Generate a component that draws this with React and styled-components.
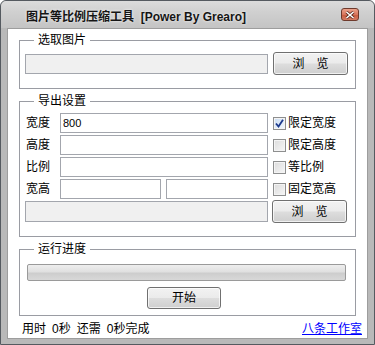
import React from "react";
import styled, { createGlobalStyle } from "styled-components";

const Global = createGlobalStyle`
  html, body { margin: 0; padding: 0; background: #ffffff; }
  body { font-family: "Liberation Sans", "Noto Sans CJK SC", sans-serif; font-size: 12px; color: #000; }
  * { box-sizing: border-box; }
`;

const FONT = `"Liberation Sans", "Noto Sans CJK SC", sans-serif`;

const Window = styled.div`
  width: 375px;
  height: 345px;
  border: 1px solid #555a60;
  border-radius: 6px 6px 0 0;
  background: #b9b9b9;
  display: flex;
  flex-direction: column;
  overflow: hidden;
`;

const TitleBar = styled.div`
  height: 27px;
  flex: none;
  display: flex;
  align-items: center;
  padding: 0 15px 0 25px;
  background: linear-gradient(#dcdcdc 0%, #d0d0d0 40%, #c4c4c4 100%);
  border-radius: 5px 5px 0 0;
`;

const Title = styled.div`
  flex: 1;
  font-family: ${FONT};
  font-weight: bold;
  font-size: 12px;
  line-height: 14px;
  color: #151515;
  white-space: pre;
  padding-top: 4px;
  text-shadow: 0 0 3px rgba(255, 255, 255, 0.9);
`;

const CloseBtn = styled.div`
  width: 18px;
  height: 13px;
  border: 1px solid #6e3a2c;
  border-radius: 3px;
  background: linear-gradient(#eba38c 0%, #d9765d 50%, #c85a3e 51%, #d57c63 100%);
  display: flex;
  align-items: center;
  justify-content: center;
`;

const Client = styled.div`
  flex: 1;
  margin: 0 6px 6px 6px;
  border: 1px solid #9d9d9d;
  background: #ffffff;
  padding: 11px 11px 0 11px;
  display: flex;
  flex-direction: column;
`;

const Group = styled.div`
  border: 1px solid #9a9ca3;
  display: flex;
  flex-direction: column;
  padding: 0 0 ${(p) => p.$pb}px 5px;
  margin-bottom: ${(p) => p.$mb}px;
`;

const Legend = styled.div`
  align-self: flex-start;
  margin: -8px 0 0 9px;
  padding: 0 4px;
  background: #ffffff;
  line-height: 14px;
  height: 14px;
  font-family: ${FONT};
  font-size: 12px;
  color: #000;
`;

const Row = styled.div`
  display: flex;
  align-items: center;
  gap: ${(p) => p.$gap ?? 5}px;
  margin-top: ${(p) => p.$mt}px;
  height: ${(p) => p.$h}px;
`;

const Label = styled.div`
  width: 30px;
  padding-left: 1px;
  font-family: ${FONT};
  font-size: 12px;
  line-height: 14px;
  flex: none;
`;

const TextBox = styled.input`
  width: ${(p) => p.$w}px;
  height: ${(p) => p.$h ?? 20}px;
  flex: none;
  border: 1px solid #a3a6ad;
  background: ${(p) => (p.$disabled ? "#f0f0f0" : "#ffffff")};
  font-family: "Liberation Sans", "DejaVu Sans", sans-serif;
  font-size: 11px;
  padding: 0 2px;
  margin: 0;
  outline: none;
  color: #000;
`;

const Button = styled.div`
  width: ${(p) => p.$w ?? 75}px;
  height: ${(p) => p.$h ?? 23}px;
  flex: none;
  border: 1px solid #707070;
  border-radius: 3px;
  background: linear-gradient(#f2f2f2 0%, #ebebeb 48%, #dddddd 52%, #cfcfcf 100%);
  box-shadow: inset 0 0 0 1px rgba(255, 255, 255, 0.7);
  display: flex;
  align-items: center;
  justify-content: center;
  font-family: ${FONT};
  font-size: 12px;
  line-height: 14px;
  white-space: pre;
  margin-left: ${(p) => p.$ml ?? 0}px;
`;

const Check = styled.div`
  display: flex;
  align-items: center;
  gap: 2px;
  font-family: ${FONT};
  font-size: 12px;
  line-height: 14px;
`;

const Box = styled.div`
  width: 13px;
  height: 13px;
  border: 1px solid #8e8f8f;
  background: ${(p) =>
    p.$on
      ? "linear-gradient(135deg, #c9dcf3, #f4f8fd)"
      : "linear-gradient(135deg, #dcdcdc, #f6f6f6)"};
  box-shadow: inset 0 0 0 1px #f4f4f4;
  display: flex;
  align-items: center;
  justify-content: center;
`;

const Progress = styled.div`
  height: 17px;
  margin: 8px 9px 0 2px;
  border: 1px solid #9a9a9a;
  border-radius: 2px;
  background: linear-gradient(#eeeeee 0%, #e0e0e0 45%, #cdcdcd 55%, #d8d8d8 100%);
`;

const Status = styled.div`
  height: 22px;
  display: flex;
  align-items: center;
  justify-content: space-between;
  margin: 0 -11px;
  padding: 0 5px 0 14px;
  font-family: ${FONT};
  font-size: 12px;
`;

const StatusLeft = styled.div`
  display: flex;
  gap: 6px;
`;

const Link = styled.a`
  color: #0000ff;
  text-decoration: underline;
  cursor: pointer;
`;

function CheckItem({ on, children }) {
  return (
    <Check>
      <Box $on={on}>
        {on && (
          <svg width="9" height="9" viewBox="0 0 9 9">
            <path d="M1 4.5 L3.5 7.5 L8 0.8" stroke="#1c3a8c" strokeWidth="1.8" fill="none" />
          </svg>
        )}
      </Box>
      {children}
    </Check>
  );
}

export default function App() {
  return (
    <>
      <Global />
      <Window>
        <TitleBar>
          <Title>{"图片等比例压缩工具  [Power By Grearo]"}</Title>
          <CloseBtn>
            <svg width="10" height="8" viewBox="0 0 10 8">
              <path d="M1.5 1 L8.5 7 M8.5 1 L1.5 7" stroke="#5a2a1e" strokeWidth="3" />
              <path d="M1.5 1 L8.5 7 M8.5 1 L1.5 7" stroke="#ffffff" strokeWidth="1.6" />
            </svg>
          </CloseBtn>
        </TitleBar>
        <Client>
          <Group $pb={13} $mb={12}>
            <Legend>选取图片</Legend>
            <Row $mt={5} $h={23}>
              <TextBox $w={243} $disabled readOnly />
              <Button>{"浏　览"}</Button>
            </Row>
          </Group>
          <Group $pb={13} $mb={12}>
            <Legend>导出设置</Legend>
            <Row $mt={5} $h={20}>
              <Label>宽度</Label>
              <TextBox $w={208} defaultValue="800" />
              <CheckItem on>限定宽度</CheckItem>
            </Row>
            <Row $mt={2} $h={20}>
              <Label>高度</Label>
              <TextBox $w={208} />
              <CheckItem>限定高度</CheckItem>
            </Row>
            <Row $mt={2} $h={20}>
              <Label>比例</Label>
              <TextBox $w={208} />
              <CheckItem>等比例</CheckItem>
            </Row>
            <Row $mt={2} $h={20}>
              <Label>宽高</Label>
              <Row $gap={5} $mt={0} $h={20}>
                <TextBox $w={101} />
                <TextBox $w={102} />
              </Row>
              <CheckItem>固定宽高</CheckItem>
            </Row>
            <Row $mt={1} $h={23} $gap={4}>
              <TextBox $w={243} $h={21} $disabled readOnly />
              <Button>{"浏　览"}</Button>
            </Row>
          </Group>
          <Group $pb={6} $mb={0}>
            <Legend>运行进度</Legend>
            <Progress />
            <Row $mt={6} $h={22}>
              <Button $w={74} $h={22} $ml={122}>开始</Button>
            </Row>
          </Group>
          <Status>
            <StatusLeft>
              <span>用时</span>
              <span>0秒</span>
              <span>还需</span>
              <span>0秒完成</span>
            </StatusLeft>
            <Link>八条工作室</Link>
          </Status>
        </Client>
      </Window>
    </>
  );
}
